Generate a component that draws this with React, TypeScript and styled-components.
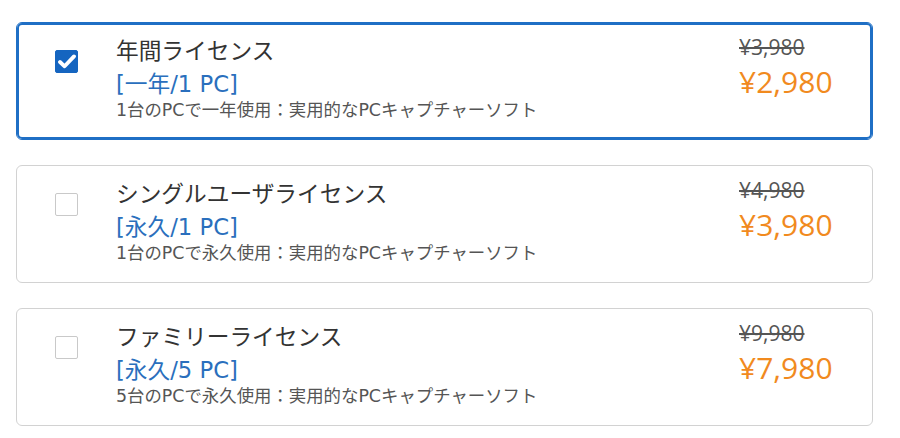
import React from 'react';
import styled, { createGlobalStyle } from 'styled-components';

const GlobalStyle = createGlobalStyle`
  html, body { margin: 0; padding: 0; background: #ffffff; }
  body { font-family: "DejaVu Sans", "Noto Sans CJK JP", sans-serif; }
`;

const Page = styled.div`
  width: 900px;
  box-sizing: border-box;
  padding: 22px 27px 0 16px;
  display: flex;
  flex-direction: column;
  gap: 25px;
`;

const Card = styled.div<{ $selected: boolean }>`
  box-sizing: border-box;
  height: 118px;
  border: 1px solid ${(p) => (p.$selected ? '#1f6fc5' : '#d2d2d2')};
  box-shadow: ${(p) => (p.$selected ? 'inset 0 0 0 2px #1f6fc5' : 'none')};
  border-radius: 6px;
  display: grid;
  grid-template-columns: 61px 1fr 133px;
  padding: 12px 0 0 38px;
  cursor: pointer;
`;

const CheckCell = styled.div`
  padding-top: 15px;
`;

const Box = styled.div<{ $checked: boolean }>`
  box-sizing: border-box;
  width: 23px;
  height: 23px;
  border-radius: 2px;
  border: 1px solid ${(p) => (p.$checked ? '#1565c0' : '#c9c9c9')};
  background: ${(p) => (p.$checked ? '#1565c0' : '#ffffff')};
  display: flex;
  align-items: center;
  justify-content: center;
`;

const Info = styled.div`
  display: flex;
  flex-direction: column;
`;

const Title = styled.div`
  font-size: 22.7px;
  line-height: 33px;
  color: #333333;
`;

const Plan = styled.div`
  font-size: 22.7px;
  line-height: 32px;
  color: #2a6fbd;
`;

const Desc = styled.div`
  font-size: 17.4px;
  line-height: 21px;
  color: #555555;
`;

const Prices = styled.div`
  display: flex;
  flex-direction: column;
  font-family: "Open Sans", "Noto Sans CJK JP", sans-serif;
`;

const OldPrice = styled.div`
  font-size: 21px;
  line-height: 25px;
  color: #555555;
  text-decoration: line-through;
  text-decoration-thickness: 2px;
`;

const NewPrice = styled.div`
  margin-top: 5px;
  font-size: 30px;
  line-height: 34px;
  color: #f18a1e;
`;

type PlanData = {
  title: string;
  plan: string;
  desc: string;
  oldPrice: string;
  newPrice: string;
  selected: boolean;
};

const plans: PlanData[] = [
  {
    title: '年間ライセンス',
    plan: '[一年/1 PC]',
    desc: '1台のPCで一年使用：実用的なPCキャプチャーソフト',
    oldPrice: '¥3,980',
    newPrice: '¥2,980',
    selected: true,
  },
  {
    title: 'シングルユーザライセンス',
    plan: '[永久/1 PC]',
    desc: '1台のPCで永久使用：実用的なPCキャプチャーソフト',
    oldPrice: '¥4,980',
    newPrice: '¥3,980',
    selected: false,
  },
  {
    title: 'ファミリーライセンス',
    plan: '[永久/5 PC]',
    desc: '5台のPCで永久使用：実用的なPCキャプチャーソフト',
    oldPrice: '¥9,980',
    newPrice: '¥7,980',
    selected: false,
  },
];

const CheckMark = () => (
  <svg width="18" height="15" viewBox="0 0 18 15">
    <path
      d="M2 8 L6.6 12.3 L16 2.4"
      fill="none"
      stroke="#ffffff"
      strokeWidth="3.8"
      strokeLinecap="round"
      strokeLinejoin="round"
    />
  </svg>
);

export default function App() {
  return (
    <>
      <GlobalStyle />
      <Page>
        {plans.map((p) => (
          <Card key={p.title} $selected={p.selected}>
            <CheckCell>
              <Box $checked={p.selected}>{p.selected && <CheckMark />}</Box>
            </CheckCell>
            <Info>
              <Title>{p.title}</Title>
              <Plan>{p.plan}</Plan>
              <Desc>{p.desc}</Desc>
            </Info>
            <Prices>
              <OldPrice>{p.oldPrice}</OldPrice>
              <NewPrice>{p.newPrice}</NewPrice>
            </Prices>
          </Card>
        ))}
      </Page>
    </>
  );
}
